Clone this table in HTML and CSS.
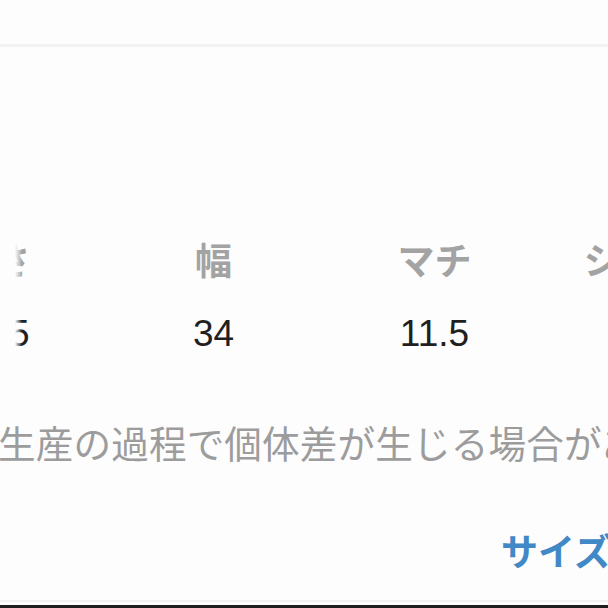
FILE: index.html
```html
<!DOCTYPE html>
<html lang="ja">
<head>
    <meta charset="UTF-8">
    <meta name="viewport" content="width=device-width, initial-scale=1.0">
    <title>サイズ</title>
    <link rel="stylesheet" href="styles.css">
</head>
<body>

    <div class="page">
        <div class="divider"></div>

        <div class="table-scroll">
            <div class="size-table">
                <div class="cell head">高さ</div>
                <div class="cell head">幅</div>
                <div class="cell head">マチ</div>
                <div class="cell head">ショルダー</div>
                <div class="cell value">24.5</div>
                <div class="cell value">34</div>
                <div class="cell value">11.5</div>
                <div class="cell value">120</div>
            </div>
        </div>

        <p class="note">生産の過程で個体差が生じる場合があります。</p>

        <div class="more-link">サイズガイド</div>

        <div class="footer-line"></div>
        <div class="bottom-bar"></div>
    </div>

</body>
</html>
```

FILE: styles.css
```css
html, body {
    margin: 0;
    padding: 0;
    width: 608px;
    height: 608px;
    overflow: hidden;
    background-color: #fdfdfd;
}

body {
    font-family: "Liberation Sans", "Noto Sans CJK JP", sans-serif;
    font-size: 37px;
    line-height: 37px;
}

.page {
    padding-top: 44px;
}

.divider {
    height: 3px;
    background-color: #f1f1f1;
}

/* horizontally scrolled table, faded at the left edge */
.table-scroll {
    position: relative;
    margin-top: 197px;
}

.table-scroll::before {
    content: "";
    position: absolute;
    top: 0;
    bottom: 0;
    left: 0;
    width: 22px;
    background: linear-gradient(to right, #fdfdfd 0, #fdfdfd 15px, rgba(253, 253, 253, 0) 22px);
    z-index: 1;
}

.size-table {
    display: grid;
    grid-template-columns: 221px 221px 221px 260px;
    row-gap: 34px;
    margin-left: -117px;
}

.cell {
    text-align: center;
    white-space: nowrap;
}

.cell:nth-child(4n+2),
.cell:nth-child(4n+3) {
    margin-left: -2px;
}

.head {
    color: #a3a3a3;
    font-weight: 700;
}

.value {
    color: #1f1f1f;
}

.note {
    margin: 75px 0 0 -2px;
    color: #9c9c9c;
    font-size: 37.6px;
    letter-spacing: 0.15px;
    white-space: nowrap;
}

.more-link {
    margin-top: 71px;
    padding-left: 501px;
    color: #4189c6;
    font-weight: 700;
    white-space: nowrap;
}

.footer-line {
    margin-top: 28px;
    height: 2px;
    background-color: #efefef;
}

.bottom-bar {
    margin-top: 3px;
    height: 10px;
    background-color: #1e1e1e;
}
```
